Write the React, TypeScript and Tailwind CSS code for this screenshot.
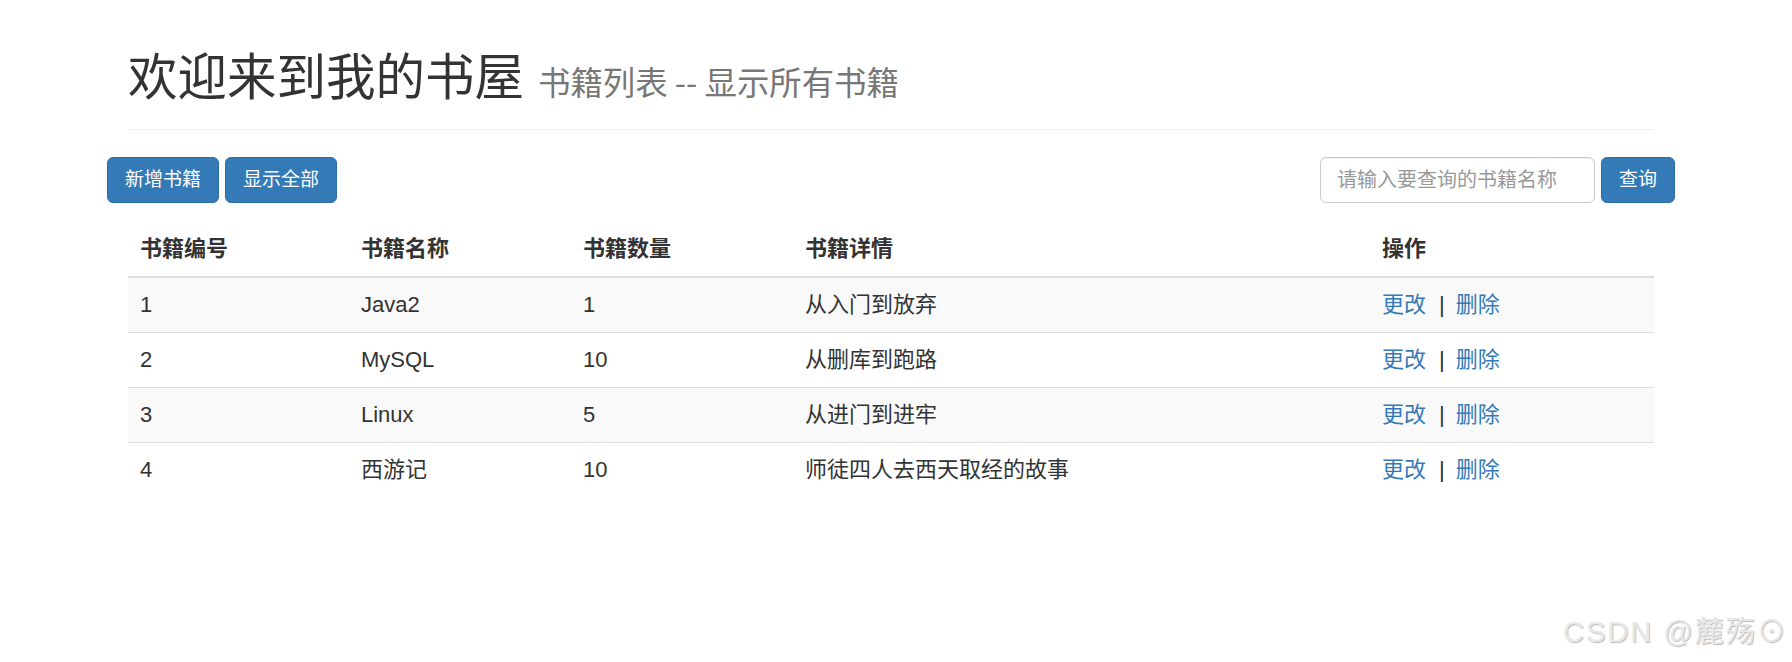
const books = [
  { id: 1, name: "Java2", count: 1, detail: "从入门到放弃" },
  { id: 2, name: "MySQL", count: 10, detail: "从删库到跑路" },
  { id: 3, name: "Linux", count: 5, detail: "从进门到进牢" },
  { id: 4, name: "西游记", count: 10, detail: "师徒四人去西天取经的故事" },
];

export default function App() {
  return (
    <div className="relative h-[662px] w-[1792px] overflow-hidden bg-white font-['Liberation_Sans','Noto_Sans_CJK_SC',sans-serif] text-[#333]">
      <div className="ml-[128px] w-[1526px]">
        {/* page header */}
        <div className="border-b border-[#eee] pt-[47px] pb-[21px]">
          <h1 className="text-[49.5px] leading-[54px] font-normal font-['Noto_Sans_CJK_SC','Liberation_Sans',sans-serif]">
            欢迎来到我的书屋
            <small className="ml-[14px] text-[32.4px] text-[#777]">书籍列表 -- 显示所有书籍</small>
          </h1>
        </div>

        {/* toolbar */}
        <div className="-mx-[21px] mt-[27px] flex items-center justify-between">
          <div className="flex gap-[6px]">
            <button className="h-[46px] rounded-[6px] border border-[#2e6da4] bg-[#337ab7] px-[17px] text-[19px] text-white">
              新增书籍
            </button>
            <button className="h-[46px] rounded-[6px] border border-[#2e6da4] bg-[#337ab7] px-[17px] text-[19px] text-white">
              显示全部
            </button>
          </div>
          <div className="flex gap-[6px]">
            <input
              className="h-[46px] w-[275px] rounded-[6px] border border-[#ccc] px-[16px] text-[20px] outline-none placeholder:text-[#999] shadow-[inset_0_1px_1px_rgba(0,0,0,0.075)]"
              placeholder="请输入要查询的书籍名称"
            />
            <button className="h-[46px] w-[74px] rounded-[6px] border border-[#2e6da4] bg-[#337ab7] text-[19px] text-white">
              查询
            </button>
          </div>
        </div>

        {/* table */}
        <table className="mt-[19px] w-full table-fixed border-collapse text-[22px] leading-[30px]">
          <colgroup>
            <col className="w-[221px]" />
            <col className="w-[222px]" />
            <col className="w-[222px]" />
            <col className="w-[577px]" />
            <col className="w-[284px]" />
          </colgroup>
          <thead>
            <tr>
              {["书籍编号", "书籍名称", "书籍数量", "书籍详情", "操作"].map((h) => (
                <th key={h} className="border-b-2 border-[#ddd] px-[12px] py-[12px] text-left font-bold">
                  {h}
                </th>
              ))}
            </tr>
          </thead>
          <tbody>
            {books.map((b, i) => (
              <tr key={b.id} className={i % 2 === 0 ? "bg-[#f9f9f9]" : ""}>
                <td className="border-t border-[#ddd] px-[12px] py-[12px]">{b.id}</td>
                <td className="border-t border-[#ddd] px-[12px] py-[12px]">{b.name}</td>
                <td className="border-t border-[#ddd] px-[12px] py-[12px]">{b.count}</td>
                <td className="border-t border-[#ddd] px-[12px] py-[12px]">{b.detail}</td>
                <td className="border-t border-[#ddd] px-[12px] py-[12px]">
                  <a href="#" className="text-[#337ab7]">更改</a>
                  <span className="ml-[13px] mr-[11px]">|</span>
                  <a href="#" className="text-[#337ab7]">删除</a>
                </td>
              </tr>
            ))}
          </tbody>
        </table>
      </div>

      {/* watermark */}
      <div className="absolute left-[1563px] top-[613px] whitespace-nowrap text-[29px] leading-[38px] tracking-[2px] text-[#e8e8e8] [text-shadow:1px_1px_1px_#bcbcbc]">
        CSDN @麓殇⊙
      </div>
    </div>
  );
}
